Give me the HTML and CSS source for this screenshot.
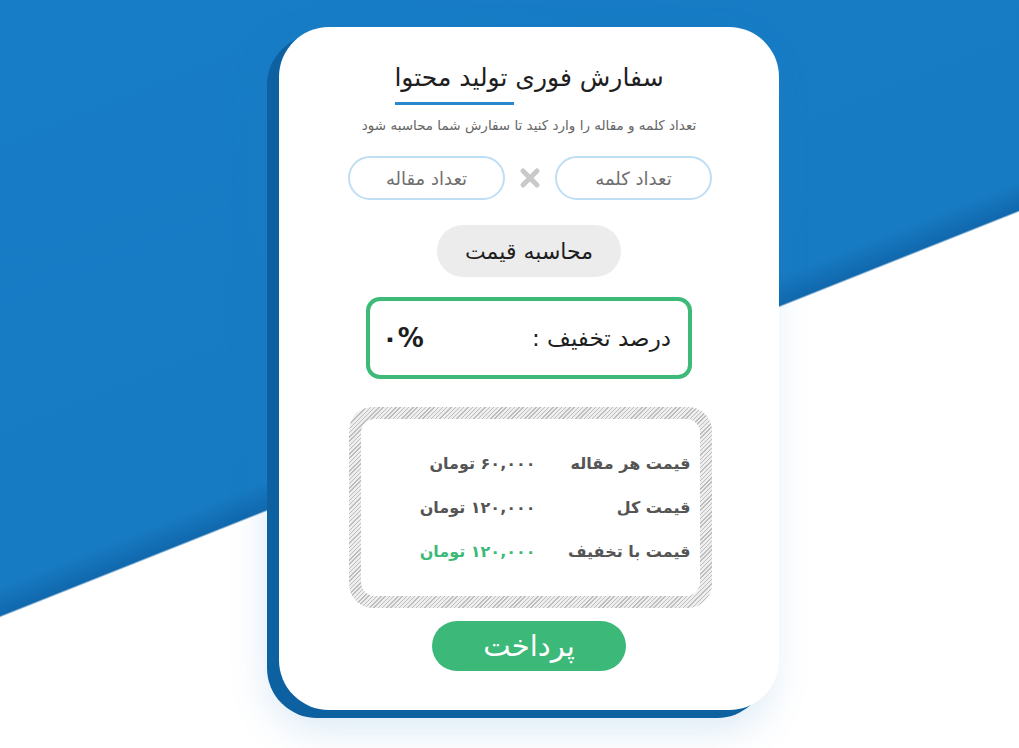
FILE: index.html
```html
<!DOCTYPE html>
<html lang="fa" dir="rtl">
<head>
<meta charset="utf-8">
<title>سفارش فوری تولید محتوا</title>
<link rel="stylesheet" href="styles.css">
</head>
<body>
<div class="page">
  <div class="card">
    <div class="title-wrap">
      <h1 class="title">سفارش فوری تولید محتوا</h1>
    </div>
    <p class="subtitle">تعداد کلمه و مقاله را وارد کنید تا سفارش شما محاسبه شود</p>
    <div class="inputs">
      <input class="field" type="text" placeholder="تعداد کلمه">
      <span class="times">
        <svg width="22" height="22" viewBox="0 0 22 22"><path d="M4 4 L18 18 M18 4 L4 18" stroke="#c9c9c9" stroke-width="5" stroke-linecap="round"/></svg>
      </span>
      <input class="field" type="text" placeholder="تعداد مقاله">
    </div>
    <button class="calc">محاسبه قیمت</button>
    <div class="discount">
      <span class="discount-label">درصد تخفیف :</span>
      <span class="discount-value">۰%</span>
    </div>
    <div class="prices">
      <div class="prices-inner">
        <span class="p-label">قیمت هر مقاله</span>
        <span class="p-value">۶۰,۰۰۰ تومان</span>
        <span class="p-label">قیمت کل</span>
        <span class="p-value">۱۲۰,۰۰۰ تومان</span>
        <span class="p-label">قیمت با تخفیف</span>
        <span class="p-value green">۱۲۰,۰۰۰ تومان</span>
      </div>
    </div>
    <button class="pay">پرداخت</button>
  </div>
</div>
</body>
</html>
```

FILE: styles.css
```css
* { box-sizing: border-box; }
html, body { margin: 0; padding: 0; }
body {
  width: 1019px;
  height: 748px;
  overflow: hidden;
  font-family: "DejaVu Sans", "Noto Sans", sans-serif;
  background: linear-gradient(158.3deg, #177dc6 0, #177bc3 545px, #1168ad 572px, #ffffff 574px);
}
.page {
  display: flex;
  justify-content: flex-start;
  direction: ltr;
  padding: 27px 0 0 279px;
}
.card {
  direction: rtl;
  width: 500px;
  height: 683px;
  background: #fff;
  border-radius: 50px;
  box-shadow: -12px 8px 0 #0e61a1, -10px 18px 40px rgba(40, 130, 200, 0.18);
  display: flex;
  flex-direction: column;
  align-items: center;
  padding-top: 34px;
}
.title-wrap {
  display: flex;
  flex-direction: column;
  align-items: center;
}
.title {
  margin: 0;
  font-size: 25px;
  font-weight: normal;
  color: #1e1e1e;
  line-height: 34px;
  position: relative;
  padding-bottom: 10px;
}
.title::after {
  content: "";
  position: absolute;
  left: 1px;
  bottom: 0;
  width: 119px;
  height: 3px;
  background: #2a87cb;
}
.subtitle {
  margin: 10px 0 0;
  font-size: 13.5px;
  color: #666;
  line-height: 20px;
}
.inputs {
  margin-top: 21px;
  display: flex;
  align-items: center;
  gap: 14px;
  margin-right: -2px;
}
.field {
  width: 157px;
  height: 44px;
  border: 2px solid #bfdef4;
  border-radius: 22px;
  background: #fff;
  font-family: "DejaVu Sans", sans-serif;
  font-size: 18px;
  text-align: center;
  color: #333;
  outline: none;
}
.field::placeholder { color: #6f6f6f; }
.times {
  display: flex;
  width: 22px;
  height: 22px;
}
.calc {
  margin-top: 25px;
  width: 184px;
  height: 52px;
  border: none;
  border-radius: 26px;
  background: #ececec;
  font-family: "DejaVu Sans", sans-serif;
  font-size: 22px;
  color: #1e1e1e;
}
.discount {
  margin-top: 20px;
  width: 326px;
  height: 82px;
  border: 4px solid #3dba78;
  border-radius: 14px;
  display: flex;
  justify-content: space-between;
  align-items: center;
  padding: 0 17px 0 12px;
}
.discount-label {
  font-size: 23px;
  color: #1e1e1e;
}
.discount-value {
  font-size: 26px;
  font-weight: bold;
  color: #1e1e1e;
  direction: ltr;
}
.prices {
  margin-top: 28px;
  width: 363px;
  height: 201px;
  border-radius: 24px;
  padding: 12px;
  background: repeating-linear-gradient(135deg, #bdbdbd 0 1px, #eeeeee 1px 3px);
  margin-right: -2px;
}
.prices-inner {
  height: 100%;
  background: #fff;
  border-radius: 14px;
  display: grid;
  grid-template-columns: 145px auto;
  column-gap: 10px;
  row-gap: 20px;
  justify-content: start;
  align-content: center;
  padding: 0 9px 0 0;
}
.p-label, .p-value {
  font-size: 16px;
  font-weight: bold;
  color: #555;
  line-height: 24px;
}
.p-value.green { color: #3dba78; }
.pay {
  margin-top: 13px;
  width: 194px;
  height: 50px;
  border: none;
  border-radius: 25px;
  background: #3cb878;
  color: #fff;
  font-family: "DejaVu Sans", sans-serif;
  font-size: 29px;
}
```
